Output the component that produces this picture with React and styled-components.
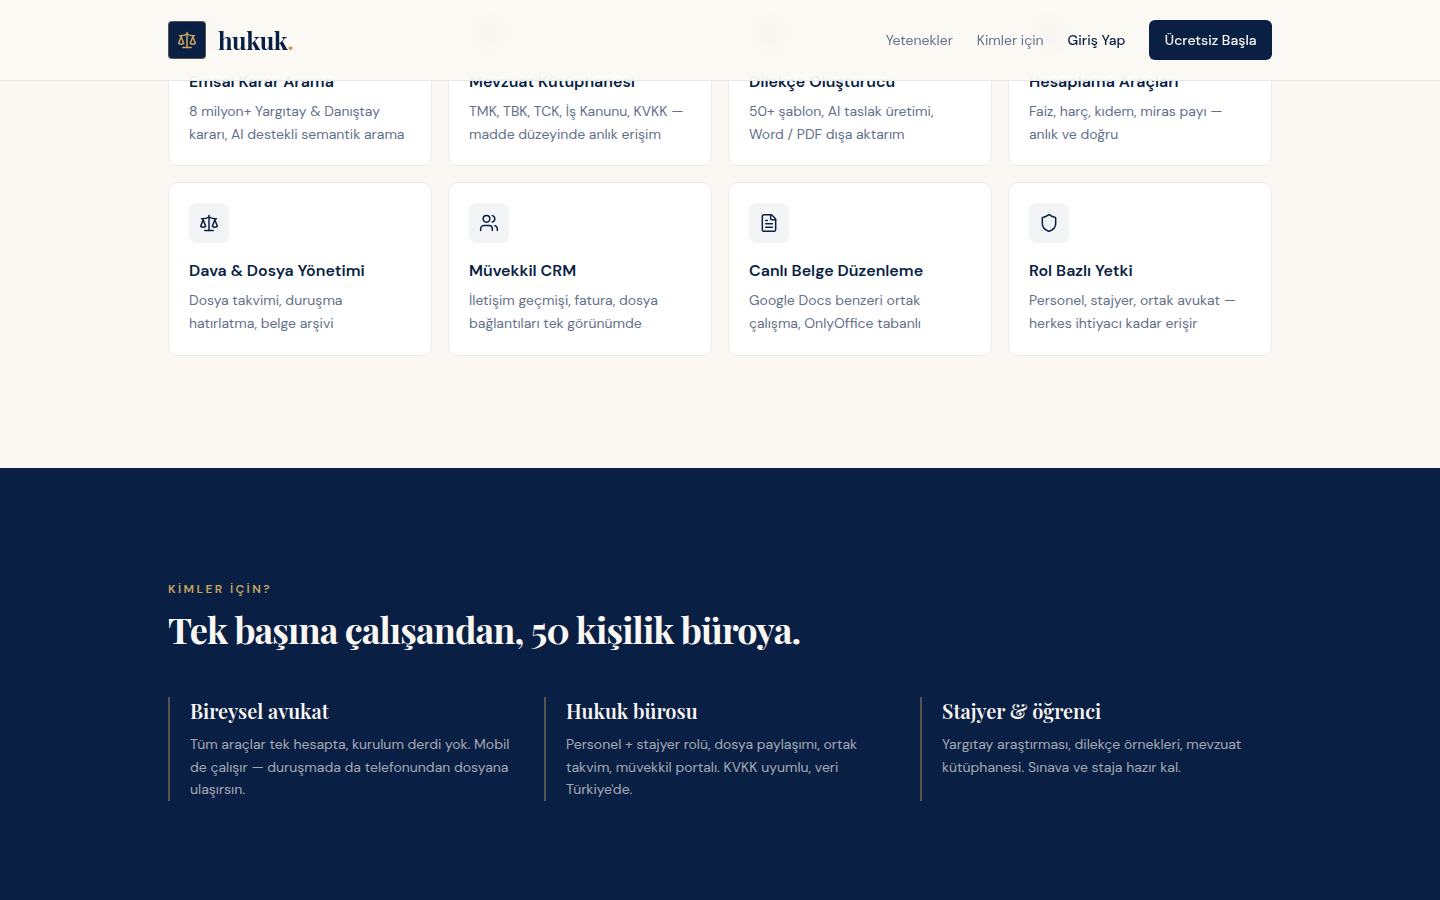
import React from 'react'
import styled, { createGlobalStyle } from 'styled-components'
import { Search, BookOpen, FileText, Calculator, Scale, Users, Shield, FilePen } from 'lucide-react'

const GlobalStyle = createGlobalStyle`
  * { box-sizing: border-box; }
  html, body { margin: 0; padding: 0; height: 100%; overflow: hidden; }
  body {
    background: #fbf8f3;
    color: #0a1f44;
    font-family: "DM Sans", "Inter", "Liberation Sans", sans-serif;
  }
`

const Header = styled.header`
  position: fixed;
  top: 0;
  left: 0;
  right: 0;
  z-index: 10;
  height: 81px;
  background: rgba(251, 248, 243, 0.92);
  backdrop-filter: blur(12px);
  border-bottom: 1px solid #e7e7e9;
`

const HeaderInner = styled.div`
  width: 1104px;
  height: 80px;
  margin: 0 auto;
  display: flex;
  align-items: center;
  justify-content: space-between;
`

const Brand = styled.div`
  display: flex;
  align-items: center;
  gap: 12px;
`

const LogoMark = styled.div`
  width: 38px;
  height: 38px;
  display: flex;
  align-items: center;
  justify-content: center;
  background: #0a1f44;
  border: 1px solid rgba(201, 165, 92, 0.4);
  border-radius: 4px;
  color: #c9a55c;
`

const Wordmark = styled.div`
  font-family: "Playfair Display", "Liberation Serif", serif;
  font-size: 24px;
  font-weight: 700;
  letter-spacing: -0.5px;
  color: #0a1f44;

  span {
    color: #c9a55c;
  }
`

const Nav = styled.nav`
  display: flex;
  align-items: center;
  gap: 24px;
`

const NavLink = styled.a`
  font-size: 14px;
  font-weight: ${p => (p.$strong ? 500 : 400)};
  color: ${p => (p.$strong ? '#0a1f44' : '#64708a')};
`

const CtaButton = styled.button`
  height: 40px;
  padding: 0 15.5px;
  border: 0;
  border-radius: 6px;
  background: #0a1f44;
  color: #fbf8f3;
  font-family: inherit;
  font-size: 14px;
  font-weight: 500;
`

const FeatureSection = styled.section`
  height: 468px;
  overflow: hidden;
`

const FeatureGrid = styled.div`
  width: 1104px;
  margin: -7.4px auto 0;
  display: grid;
  grid-template-columns: repeat(4, 1fr);
  gap: 16px;
`

const Card = styled.article`
  padding: 20px 20px 19.5px;
  background: #fff;
  border: 1px solid #ebebee;
  border-radius: 10px;
`

const IconBox = styled.div`
  width: 40px;
  height: 40px;
  display: flex;
  align-items: center;
  justify-content: center;
  background: #f3f4f6;
  border-radius: 8px;
  color: #0a1f44;
`

const CardTitle = styled.h3`
  margin: 16px 0 6px;
  font-size: 16px;
  line-height: 24px;
  font-weight: 600;
  color: #0a1f44;
`

const CardText = styled.p`
  margin: 0;
  font-size: 14px;
  line-height: 23px;
  color: #64708a;
`

const AudienceSection = styled.section`
  height: 432px;
  padding-top: 112px;
  background: #0a1f44;
`

const AudienceInner = styled.div`
  width: 1104px;
  margin: 0 auto;
`

const Eyebrow = styled.div`
  font-size: 12px;
  line-height: 18px;
  font-weight: 600;
  letter-spacing: 2.4px;
  color: #c9a55c;
`

const Heading = styled.h2`
  margin: 6px 0 43px;
  font-family: "Playfair Display", "Liberation Serif", serif;
  font-size: 36px;
  line-height: 50px;
  font-weight: 700;
  letter-spacing: -0.9px;
  color: #fbf8f3;
`

const Columns = styled.div`
  display: grid;
  grid-template-columns: repeat(3, 1fr);
  gap: 24px;
`

const Column = styled.div`
  min-height: 104px;
  padding-left: 20px;
  border-left: 2px solid rgba(201, 165, 92, 0.4);
`

const ColumnTitle = styled.h4`
  margin: 0 0 8.2px;
  font-family: "Playfair Display", "Liberation Serif", serif;
  font-size: 20px;
  line-height: 28px;
  font-weight: 600;
  color: #fbf8f3;
`

const ColumnText = styled.p`
  margin: 0;
  font-size: 14px;
  line-height: 22.4px;
  color: rgba(251, 248, 243, 0.65);
`

const features = [
  { icon: Search, title: 'Emsal Karar Arama', text: '8 milyon+ Yargıtay & Danıştay kararı, AI destekli semantik arama' },
  { icon: BookOpen, title: 'Mevzuat Kütüphanesi', text: 'TMK, TBK, TCK, İş Kanunu, KVKK — madde düzeyinde anlık erişim' },
  { icon: FilePen, title: 'Dilekçe Oluşturucu', text: '50+ şablon, AI taslak üretimi, Word / PDF dışa aktarım' },
  { icon: Calculator, title: 'Hesaplama Araçları', text: 'Faiz, harç, kıdem, miras payı — anlık ve doğru' },
  { icon: Scale, title: 'Dava & Dosya Yönetimi', text: 'Dosya takvimi, duruşma hatırlatma, belge arşivi' },
  { icon: Users, title: 'Müvekkil CRM', text: 'İletişim geçmişi, fatura, dosya bağlantıları tek görünümde' },
  { icon: FileText, title: 'Canlı Belge Düzenleme', text: 'Google Docs benzeri ortak çalışma, OnlyOffice tabanlı' },
  { icon: Shield, title: 'Rol Bazlı Yetki', text: 'Personel, stajyer, ortak avukat — herkes ihtiyacı kadar erişir' },
]

const audiences = [
  { title: 'Bireysel avukat', text: 'Tüm araçlar tek hesapta, kurulum derdi yok. Mobil de çalışır — duruşmada da telefonundan dosyana ulaşırsın.' },
  { title: 'Hukuk bürosu', text: "Personel + stajyer rolü, dosya paylaşımı, ortak takvim, müvekkil portalı. KVKK uyumlu, veri Türkiye'de." },
  { title: 'Stajyer & öğrenci', text: 'Yargıtay araştırması, dilekçe örnekleri, mevzuat kütüphanesi. Sınava ve staja hazır kal.' },
]

const App = () => {
  return (
    <>
      <GlobalStyle />
      <Header>
        <HeaderInner>
          <Brand>
            <LogoMark><Scale size={20} strokeWidth={1.8} /></LogoMark>
            <Wordmark>hukuk<span>.</span></Wordmark>
          </Brand>
          <Nav>
            <NavLink>Yetenekler</NavLink>
            <NavLink>Kimler için</NavLink>
            <NavLink $strong>Giriş Yap</NavLink>
            <CtaButton>Ücretsiz Başla</CtaButton>
          </Nav>
        </HeaderInner>
      </Header>
      <FeatureSection>
        <FeatureGrid>
          {features.map(({ icon: Icon, title, text }) => (
            <Card key={title}>
              <IconBox><Icon size={20} strokeWidth={1.8} /></IconBox>
              <CardTitle>{title}</CardTitle>
              <CardText>{text}</CardText>
            </Card>
          ))}
        </FeatureGrid>
      </FeatureSection>
      <AudienceSection>
        <AudienceInner>
          <Eyebrow>KİMLER İÇİN?</Eyebrow>
          <Heading>Tek başına çalışandan, 50 kişilik büroya.</Heading>
          <Columns>
            {audiences.map(item => (
              <Column key={item.title}>
                <ColumnTitle>{item.title}</ColumnTitle>
                <ColumnText>{item.text}</ColumnText>
              </Column>
            ))}
          </Columns>
        </AudienceInner>
      </AudienceSection>
    </>
  )
}

export default App
